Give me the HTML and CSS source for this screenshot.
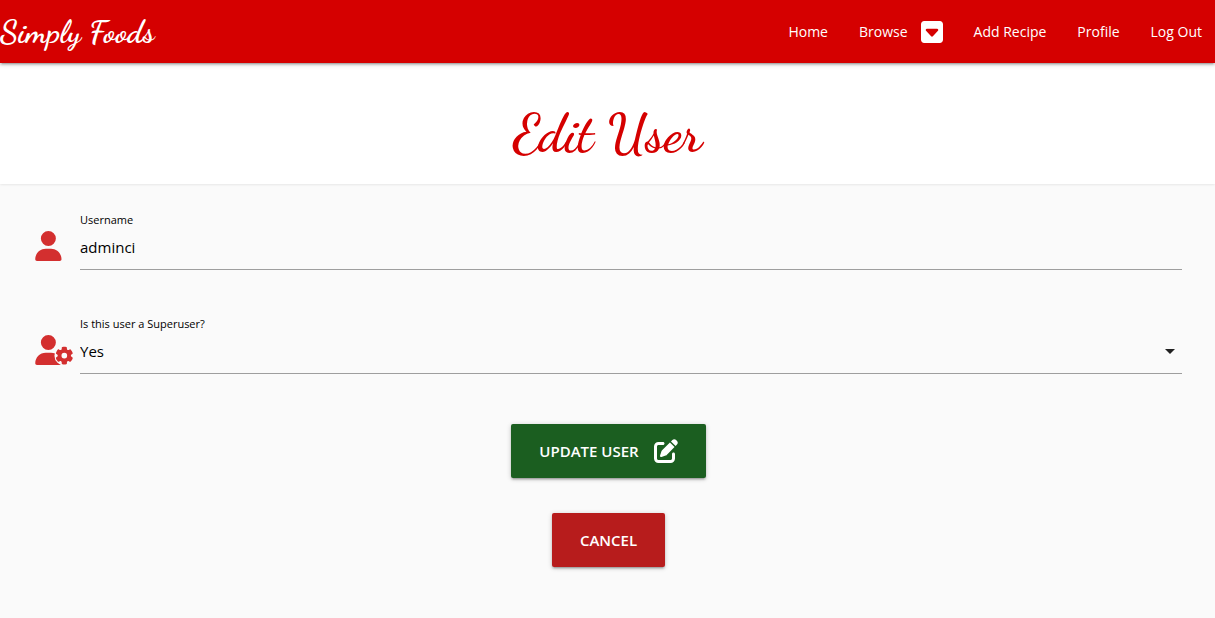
FILE: index.html
```html
<!DOCTYPE html>
<html lang="en">
<head>
<meta charset="utf-8">
<meta name="viewport" content="width=device-width, initial-scale=1">
<title>Simply Foods - Edit User</title>
<link rel="stylesheet" href="styles.css">
</head>
<body>
<nav class="navbar">
  <a class="brand" href="#">Simply Foods</a>
  <ul class="nav-links">
    <li><a href="#">Home</a></li>
    <li><a href="#">Browse
      <svg class="caret-icon" viewBox="0 32 448 448" aria-hidden="true"><path d="M384 480c35.3 0 64-28.7 64-64V96c0-35.3-28.7-64-64-64H64C28.7 32 0 60.7 0 96v320c0 35.3 28.7 64 64 64h320zM224 352c-6.7 0-13-2.8-17.6-7.7l-104-112c-6.5-7-8.2-17.2-4.4-25.9s12.5-14.4 22-14.4h208c9.5 0 18.2 5.7 22 14.4s2.1 18.9-4.4 25.9l-104 112c-4.5 4.9-10.9 7.7-17.6 7.7z"/></svg></a></li>
    <li><a href="#">Add Recipe</a></li>
    <li><a href="#">Profile</a></li>
    <li><a href="#">Log Out</a></li>
  </ul>
</nav>
<header class="page-header">
  <h1>Edit User</h1>
</header>
<main>
  <form class="user-form">
    <div class="field">
      <svg class="field-icon" viewBox="0 0 640 512" aria-hidden="true"><path d="M224 256A128 128 0 1 0 224 0a128 128 0 1 0 0 256zm-45.700 48C79.800 304 0 383.800 0 482.300C0 498.700 13.300 512 29.700 512H418.300c16.400 0 29.700-13.300 29.700-29.700C448 383.800 368.200 304 269.700 304H178.300z"/></svg>
      <div class="control">
        <label for="username">Username</label>
        <input id="username" type="text" value="adminci">
      </div>
    </div>
    <div class="field">
      <svg class="field-icon" viewBox="0 0 640 512" aria-hidden="true">
        <path d="M224 256A128 128 0 1 0 224 0a128 128 0 1 0 0 256zm-45.700 48C79.800 304 0 383.800 0 482.300C0 498.700 13.300 512 29.700 512H418.300c16.400 0 29.700-13.300 29.700-29.700C448 383.800 368.200 304 269.700 304H178.300z"/>
        <circle class="gear-gap" cx="496" cy="352" r="168"/>
        <path transform="translate(16 0)" fill-rule="evenodd" d="M436 218.2c0-7 4.500-13.300 11.300-14.800c10.500-2.400 21.500-3.700 32.700-3.700s22.200 1.300 32.700 3.700c6.800 1.500 11.300 7.800 11.300 14.800v17.700c0 7.800 4.800 14.800 11.600 18.700c6.800 3.900 15.100 4.500 21.800 .6l13.800-7.900c6.100-3.500 13.700-2.700 18.500 2.400c7.600 8.100 14.300 17.200 20.100 27.200s10.300 20.400 13.500 31c2.100 6.700-1.100 13.700-7.200 17.200l-14.400 8.300c-6.500 3.700-10 10.900-10 18.400s3.500 14.700 10 18.400l14.400 8.300c6.100 3.500 9.200 10.500 7.200 17.200c-3.300 10.600-7.800 21-13.500 31s-12.500 19.100-20.100 27.200c-4.800 5.100-12.500 5.900-18.500 2.400l-13.800-7.900c-6.700-3.900-15.100-3.300-21.800 .6c-6.800 3.900-11.600 10.900-11.600 18.700v17.700c0 7-4.500 13.300-11.300 14.800c-10.500 2.400-21.500 3.700-32.700 3.700s-22.200-1.300-32.700-3.700c-6.800-1.500-11.300-7.800-11.300-14.800V467.800c0-7.900-4.900-14.900-11.700-18.900c-6.800-3.900-15.200-4.500-22-.6l-13.500 7.800c-6.100 3.500-13.700 2.700-18.500-2.400c-7.600-8.100-14.300-17.200-20.100-27.200s-10.300-20.400-13.500-31c-2.100-6.700 1.100-13.700 7.200-17.200l14-8.100c6.500-3.800 10.100-11.100 10.100-18.600s-3.500-14.800-10.100-18.600l-14-8.100c-6.100-3.500-9.200-10.500-7.200-17.200c3.300-10.600 7.700-21 13.500-31s12.500-19.100 20.100-27.200c4.800-5.100 12.400-5.900 18.500-2.400l13.600 7.800c6.800 3.900 15.200 3.300 22-.6c6.900-3.900 11.700-11 11.700-18.900V218.200zm92.100 133.500a48.100 48.100 0 1 0-96.100 0a48.100 48.100 0 1 0 96.100 0z"/>
      </svg>
      <div class="control">
        <label for="superuser">Is this user a Superuser?</label>
        <div class="select-wrap">
          <select id="superuser"><option>Yes</option><option>No</option></select>
          <svg class="select-arrow" viewBox="0 0 10 5" aria-hidden="true"><path d="M0 0h10L5 5z"/></svg>
        </div>
      </div>
    </div>
    <div class="actions">
      <button class="btn btn-update" type="submit">Update User
        <svg class="edit-icon" viewBox="0 0 512 512" aria-hidden="true"><path d="M471.600 21.700c-21.900-21.900-57.300-21.900-79.200 0L362.300 51.700l97.900 97.900 30.100-30.100c21.900-21.900 21.900-57.300 0-79.200L471.600 21.700zm-299.200 220c-6.100 6.100-10.800 13.600-13.500 21.900l-29.600 88.800c-2.900 8.600-.6 18.100 5.800 24.600s15.900 8.700 24.600 5.800l88.800-29.600c8.200-2.700 15.700-7.400 21.900-13.500L437.700 172.300 339.700 74.300 172.400 241.700zM96 64C43 64 0 107 0 160V416c0 53 43 96 96 96H352c53 0 96-43 96-96V320c0-17.700-14.300-32-32-32s-32 14.300-32 32v96c0 17.700-14.300 32-32 32H96c-17.700 0-32-14.300-32-32V160c0-17.700 14.300-32 32-32h96c17.700 0 32-14.300 32-32s-14.300-32-32-32H96z"/></svg>
      </button>
      <a class="btn btn-cancel" href="#">Cancel</a>
    </div>
  </form>
</main>
</body>
</html>
```
FILE: styles.css
```css
* { box-sizing: border-box; }

body {
  margin: 0;
  min-height: 100vh;
  display: flex;
  flex-direction: column;
  background: #fafafa;
  color: #000;
  font-family: "Segoe UI", "Open Sans", "Noto Sans", sans-serif;
  font-size: 15px;
}

.navbar {
  position: relative;
  display: flex;
  align-items: center;
  justify-content: space-between;
  height: 63px;
  padding-right: 13px;
  background: #d50000;
  box-shadow: 0 2px 2px 0 rgba(0, 0, 0, .14), 0 3px 1px -2px rgba(0, 0, 0, .12), 0 1px 5px 0 rgba(0, 0, 0, .2);
}

.navbar a { color: #fff; text-decoration: none; }

.brand,
.page-header h1 {
  font-family: "Dancing Script", "Liberation Serif", cursive;
}

.navbar .brand {
  font-size: 32px;
  font-weight: 700;
}

.nav-links {
  display: flex;
  align-items: center;
  gap: 31px;
  margin: 0;
  padding: 0;
  list-style: none;
  font-size: 14px;
  font-weight: 500;
}

.nav-links a { display: flex; align-items: center; gap: 13px; }
.caret-icon { width: 22px; height: 22px; fill: #fff; }

.page-header {
  padding: 38px 0 18px;
  background: #fff;
  box-shadow: 0 0 3px rgba(0, 0, 0, .14);
  text-align: center;
}

.page-header h1 {
  margin: 0;
  color: #d50000;
  font-size: 54px;
  font-weight: 600;
  line-height: 65px;
}

.user-form { padding: 26px 33px 50px 35px; }

.field {
  display: flex;
  align-items: flex-start;
  gap: 7px;
  margin-bottom: 44px;
}

.field-icon {
  flex: none;
  width: 38px;
  height: 30px;
  margin-top: 21px;
  fill: #d32f2f;
}

.gear-gap { fill: #fafafa; }
.control { flex: 1; }

.control label {
  display: block;
  height: 15px;
  font-size: 11px;
  line-height: 20px;
}

.control input,
.control select {
  display: block;
  width: 100%;
  height: 45px;
  margin: 0;
  padding: 0;
  border: 0;
  border-bottom: 1px solid #9e9e9e;
  border-radius: 0;
  outline: 0;
  background: transparent;
  color: #000;
  font-family: inherit;
  font-size: 15px;
  appearance: none;
}

.select-wrap { position: relative; }

.select-arrow {
  position: absolute;
  top: 20px;
  right: 7px;
  width: 10px;
  height: 5px;
  fill: #212121;
  pointer-events: none;
}

.actions {
  display: flex;
  flex-direction: column;
  align-items: center;
  gap: 35px;
  padding-top: 6px;
}

.btn {
  display: flex;
  align-items: center;
  gap: 15px;
  height: 54px;
  padding: 0 28px;
  border: 0;
  border-radius: 2px;
  box-shadow: 0 2px 2px 0 rgba(0, 0, 0, .14), 0 3px 1px -2px rgba(0, 0, 0, .12), 0 1px 5px 0 rgba(0, 0, 0, .2);
  color: #fff;
  font-family: inherit;
  font-size: 15px;
  font-weight: 600;
  text-decoration: none;
  text-transform: uppercase;
  cursor: pointer;
}

.btn-update { background: #1b5e20; }
.btn-cancel { background: #b71c1c; }
.edit-icon { width: 24px; height: 24px; fill: #fff; }
```
